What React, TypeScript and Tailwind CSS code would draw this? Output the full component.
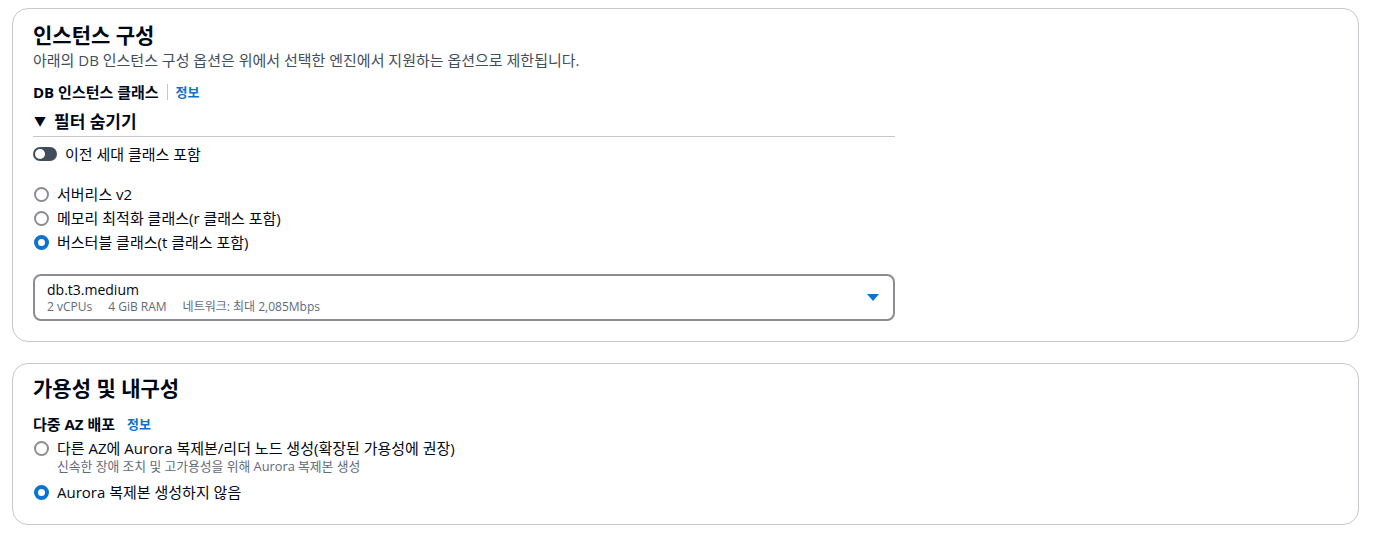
import React from 'react';

const font = { fontFamily: "'Open Sans', 'Noto Sans CJK KR', sans-serif" };

function Radio({ checked }: { checked?: boolean }) {
  return checked ? (
    <span className="w-[15px] h-[15px] rounded-full border-[4px] border-[#0972d3] bg-white shrink-0" />
  ) : (
    <span className="w-[15px] h-[15px] rounded-full border-2 border-[#8c8c94] bg-white shrink-0" />
  );
}

function RadioRow({ label, checked, desc }: { label: string; checked?: boolean; desc?: string }) {
  return (
    <div className="flex flex-col">
      <div className="flex items-center h-[24px]">
        <span className="w-[16px] flex justify-center">
          <Radio checked={checked} />
        </span>
        <span className="ml-[8px] text-[15px] text-[#000716]">{label}</span>
      </div>
      {desc && <div className="ml-[24px] text-[12.8px] leading-[16px] text-[#5f6b7a] -mt-[2px]">{desc}</div>}
    </div>
  );
}

export default function App() {
  return (
    <div style={font} className="min-h-screen bg-white pt-[8px] px-[12px] pr-[15px] text-[#000716]">
      {/* Instance configuration */}
      <section className="border border-[#c6c6cd] rounded-[16px] px-[20px] pt-[12px] pb-[20px]">
        <h2 className="text-[21px] leading-[28px] font-bold">인스턴스 구성</h2>
        <p className="text-[15px] leading-[20px] text-[#414d5c] mt-[1px]">
          아래의 DB 인스턴스 구성 옵션은 위에서 선택한 엔진에서 지원하는 옵션으로 제한됩니다.
        </p>
        <div className="mt-[12px] flex items-center text-[15px] leading-[20px]">
          <span className="font-bold">DB 인스턴스 클래스</span>
          <span className="mx-[8px] h-[16px] w-px bg-[#c6c6cd]" />
          <span className="text-[13px] font-bold text-[#0972d3]">정보</span>
        </div>
        <div className="w-[862px]">
          <div className="mt-[9px] pb-[3px] border-b border-[#c6c6cd] flex items-center text-[17px] leading-[22px] font-bold">
            <span className="text-[12px] mr-[8px] ml-[1px]">▼</span>
            필터 숨기기
          </div>
          <div className="mt-[7px] flex items-center h-[20px]">
            <span className="w-[24px] h-[14px] rounded-full bg-[#414d5c] flex items-center px-[2px]">
              <span className="w-[10px] h-[10px] rounded-full bg-white" />
            </span>
            <span className="ml-[8px] text-[15px]">이전 세대 클래스 포함</span>
          </div>
          <div className="mt-[18px] flex flex-col">
            <RadioRow label="서버리스 v2" />
            <RadioRow label="메모리 최적화 클래스(r 클래스 포함)" />
            <RadioRow label="버스터블 클래스(t 클래스 포함)" checked />
          </div>
          <div className="mt-[20px] h-[47px] border-2 border-[#8c8c94] rounded-[8px] flex items-center pl-[12px] pr-[14px]">
            <div className="flex-1 flex flex-col">
              <span className="text-[14px] leading-[18px]">db.t3.medium</span>
              <div className="flex text-[12px] leading-[16px] text-[#5f6b7a] gap-[16px]">
                <span>2 vCPUs</span>
                <span>4 GiB RAM</span>
                <span>네트워크: 최대 2,085Mbps</span>
              </div>
            </div>
            <svg width="12" height="8" viewBox="0 0 12 8">
              <path d="M0 0 H12 L6 7 Z" fill="#0972d3" />
            </svg>
          </div>
        </div>
      </section>

      {/* Availability & durability */}
      <section className="mt-[21px] border border-[#c6c6cd] rounded-[16px] px-[20px] pt-[10px] pb-[20px]">
        <h2 className="text-[21px] leading-[28px] font-bold">가용성 및 내구성</h2>
        <div className="mt-[12px] flex items-center text-[15px] leading-[20px]">
          <span className="font-bold">다중 AZ 배포</span>
          <span className="ml-[12px] text-[13px] font-bold text-[#0972d3]">정보</span>
        </div>
        <div className="mt-[2px] flex flex-col gap-[6px]">
          <RadioRow
            label="다른 AZ에 Aurora 복제본/리더 노드 생성(확장된 가용성에 권장)"
            desc="신속한 장애 조치 및 고가용성을 위해 Aurora 복제본 생성"
          />
          <RadioRow label="Aurora 복제본 생성하지 않음" checked />
        </div>
      </section>
    </div>
  );
}
